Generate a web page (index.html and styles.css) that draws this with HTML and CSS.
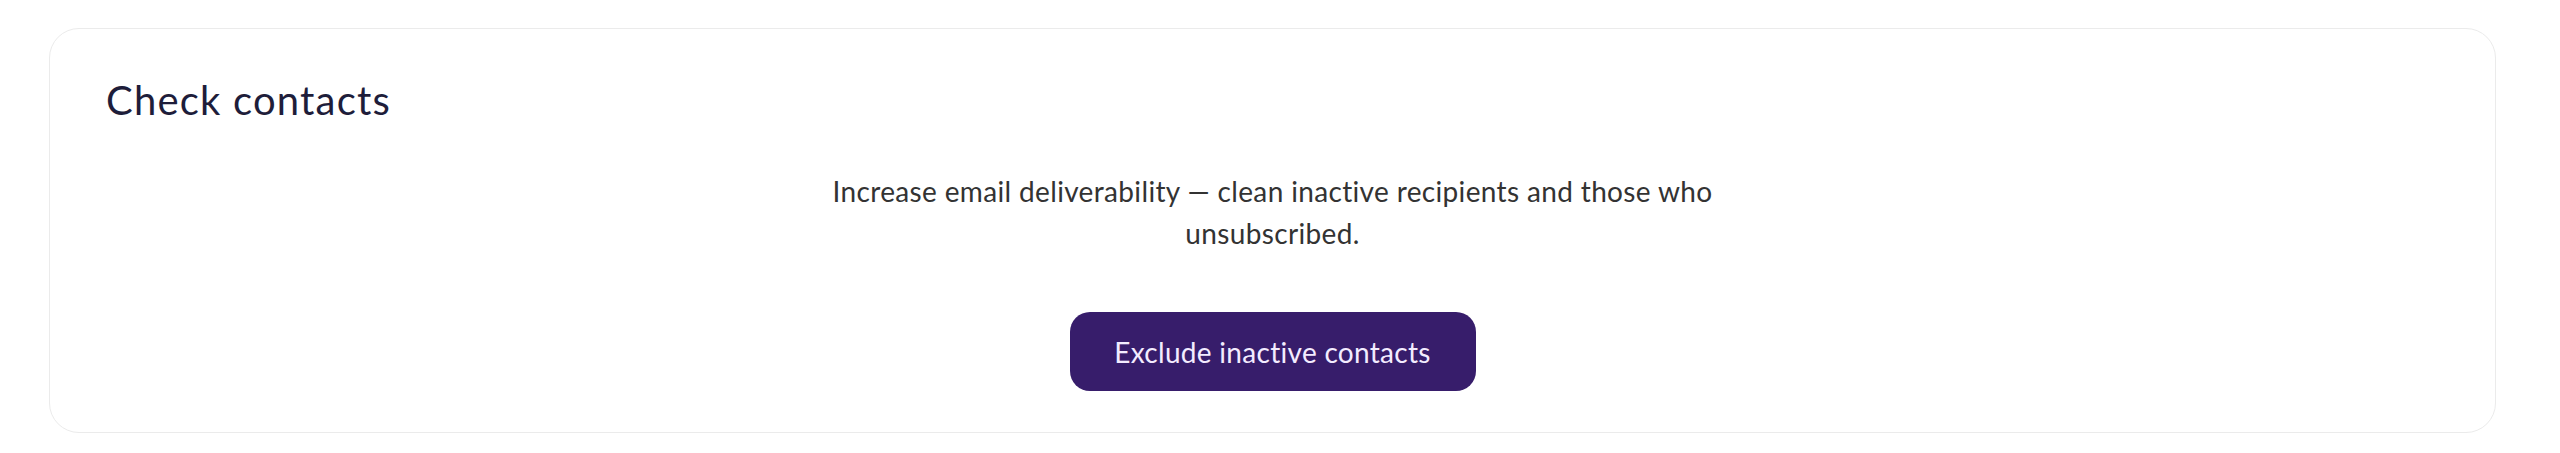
FILE: index.html
```html
<!DOCTYPE html>
<html lang="en">
<head>
    <meta charset="UTF-8">
    <meta name="viewport" content="width=device-width, initial-scale=1.0">
    <title>Check contacts</title>
    <link rel="stylesheet" href="styles.css">
</head>
<body>
    <main class="page">
        <section class="card">
            <h2 class="card-title">Check contacts</h2>

            <div class="card-body">
                <p class="card-text">
                    Increase email deliverability — clean inactive recipients and those who unsubscribed.
                </p>

                <button type="button" class="btn-primary" id="excludeBtn">
                    Exclude inactive contacts
                </button>
            </div>
        </section>
    </main>
</body>
</html>
```

FILE: styles.css
```css
* {
    margin: 0;
    padding: 0;
    box-sizing: border-box;
}

body {
    font-family: Lato, 'Open Sans', sans-serif;
    background: #ffffff;
    color: #333333;
}

.page {
    padding: 28px 64px 20px 49px;
}

.card {
    background: white;
    border: 1px solid #ebebeb;
    border-radius: 30px;
    padding: 47px 56px 41px;
    height: 405px;
}

.card-title {
    font-size: 40px;
    line-height: 48px;
    font-weight: 400;
    letter-spacing: 1.2px;
    color: #1e1d3a;
}

.card-body {
    display: flex;
    flex-direction: column;
    align-items: center;
    margin-top: 46px;
}

.card-text {
    max-width: 920px;
    font-size: 28px;
    line-height: 42px;
    letter-spacing: 0.35px;
    text-align: center;
    color: #333333;
}

.btn-primary {
    margin-top: 58px;
    width: 406px;
    height: 79px;
    background: #371d6b;
    color: #f3ecff;
    border: none;
    border-radius: 20px;
    font-family: inherit;
    font-size: 28px;
    letter-spacing: 0.3px;
    cursor: pointer;
}

.btn-primary:hover {
    background: #43247f;
}
```
